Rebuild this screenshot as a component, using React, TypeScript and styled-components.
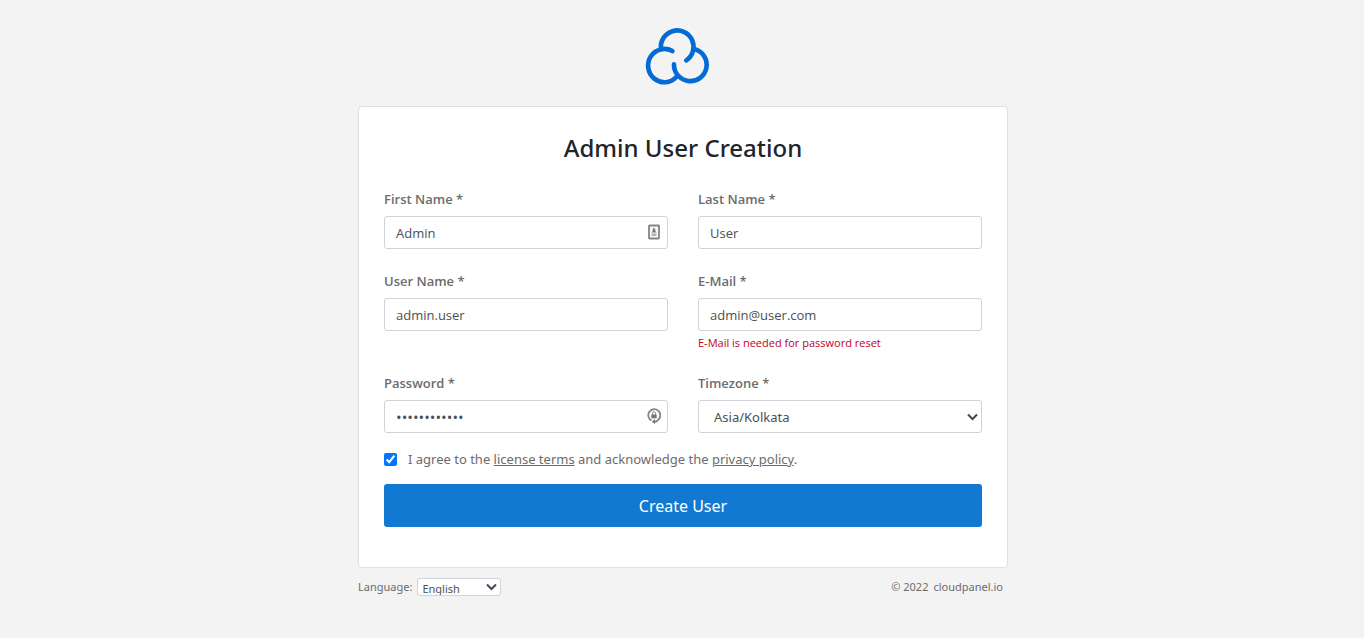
import React from "react";
import styled, { createGlobalStyle, css } from "styled-components";

const GlobalStyle = createGlobalStyle`
  *, *::before, *::after { box-sizing: border-box; }
  body {
    margin: 0;
    background: #f3f3f3;
    color: #6c6c6c;
    font-family: "Noto Sans", "Open Sans", sans-serif;
    font-size: 13px;
    line-height: 20px;
  }
`;

const Page = styled.div`
  max-width: 652px;
  margin: 0 auto;
  padding: 27px 0 24px 2px;
`;

const Header = styled.header`
  display: flex;
  justify-content: center;
  padding-right: 12px;
  margin-bottom: 21px;
`;

const Card = styled.main`
  background: #fff;
  border: 1px solid #dfdfdf;
  border-radius: 4px;
  padding: 24px 25px 40px;
`;

const Title = styled.h1`
  margin: 0 0 24px;
  color: #212529;
  font-size: 24px;
  font-weight: 500;
  line-height: 33px;
  text-align: center;
`;

const Grid = styled.div`
  display: grid;
  grid-template-columns: repeat(2, minmax(0, 1fr));
  column-gap: 30px;
  row-gap: 21px;
`;

const Field = styled.div`
  display: flex;
  flex-direction: column;
`;

const Label = styled.label`
  margin-bottom: 6px;
  font-family: "Open Sans", "Noto Sans", sans-serif;
  font-weight: 600;
  line-height: 22px;
`;

const control = css`
  width: 100%;
  height: 33px;
  border: 1px solid #ced4da;
  border-radius: 3px;
  background: #fff;
  color: #495057;
  font: inherit;
`;

const InputWrap = styled.div`
  position: relative;
  display: flex;
`;

const Input = styled.input`
  ${control}
  padding: 0 11px;
  font-family: "Open Sans", "Noto Sans", sans-serif;

  &[type="password"] {
    font-size: 15px;
  }
`;

const FieldIcon = styled.svg`
  position: absolute;
  right: 7px;
  top: 8px;
  pointer-events: none;
`;

const SelectWrap = styled.div<{ $compact?: boolean }>`
  position: relative;
  display: flex;
  width: ${(p) => (p.$compact ? "84px" : "100%")};
`;

const Select = styled.select<{ $compact?: boolean }>`
  ${control}
  appearance: none;
  height: ${(p) => (p.$compact ? "18px" : "33px")};
  padding: ${(p) => (p.$compact ? "0 4px" : "0 15px")};
`;

const Chevron = styled.svg`
  position: absolute;
  right: 4px;
  top: 50%;
  margin-top: -4px;
  pointer-events: none;
`;

const Hint = styled.small`
  margin-top: 3px;
  color: #c4001a;
  font-family: "Open Sans", "Noto Sans", sans-serif;
  font-size: 11px;
  line-height: 17px;
`;

const Terms = styled.div`
  display: flex;
  align-items: center;
  gap: 11px;
  margin: 16px 0 15px;
`;

const Checkbox = styled.input`
  width: 13px;
  height: 13px;
  margin: 0;
  accent-color: #0075ff;
`;

const Link = styled.a`
  color: inherit;
  text-decoration: underline;
`;

const Submit = styled.button`
  display: block;
  width: 100%;
  height: 43px;
  border: 0;
  border-radius: 3px;
  background: #1279d3;
  color: #fff;
  font: inherit;
  font-size: 16px;
  cursor: pointer;
`;

const Footer = styled.footer`
  display: flex;
  justify-content: space-between;
  align-items: center;
  padding: 9px 5px 0 0;
  font-size: 11px;
`;

const Language = styled.div`
  display: flex;
  align-items: center;
  gap: 5px;
`;

const Copyright = styled.div`
  display: flex;
  gap: 5px;
`;

const PlainLink = styled.a`
  color: inherit;
  text-decoration: none;
`;

const Logo = () => (
  <svg width="64" height="58" viewBox="28 22 192 174" fill="none" stroke="#046bd6" strokeWidth="14" strokeLinecap="round" overflow="visible" role="img" aria-label="CloudPanel">
    <path d="M76 88A49 49 0 1 1 152 122" />
    <path d="M110 94A49 50 0 1 0 122 172" />
    <path d="M115 134A49 49 0 1 0 176 88" />
  </svg>
);

const Arrow = () => (
  <Chevron width="11" height="8" viewBox="0 0 11 8" fill="none" stroke="#42484e" strokeWidth="2" aria-hidden="true">
    <path d="M1 1.5L5.500 6L10 1.500" />
  </Chevron>
);

const ContactIcon = () => (
  <FieldIcon width="14" height="16" viewBox="0 0 14 16" aria-hidden="true">
    <rect x="2" y="1.500" width="10" height="13" rx="0.500" fill="#f8f8f8" stroke="#858585" strokeWidth="1.800" />
    <path d="M7 3.500L8.300 5.500V7L9.500 8.500H4.500L5.700 7V5.500Z" fill="#777" />
    <path d="M4.500 9.500h5v2.500h-5z" fill="#b3b3b3" />
  </FieldIcon>
);

const KeyIcon = () => (
  <FieldIcon width="14" height="16" viewBox="0 0 14 16" fill="none" aria-hidden="true">
    <path d="M4.500 12.500A6 6 0 1 1 11.500 11.500" stroke="#858585" strokeWidth="1.800" />
    <path d="M11.800 11Q10.500 13.500 7.500 14" stroke="#858585" strokeWidth="1.800" />
    <path d="M8 11L4.800 13.700L8 16Z" fill="#777" />
    <path d="M5.500 7V5.300a1.500 1.500 0 0 1 3 0V7" stroke="#858585" />
    <rect x="4.300" y="6.500" width="5.400" height="3.800" fill="#777" />
  </FieldIcon>
);

type TextFieldProps = {
  id: string;
  label: string;
  value: string;
  type?: string;
  hint?: string;
  icon?: React.ReactNode;
};

const TextField = ({ id, label, value, type = "text", hint, icon }: TextFieldProps) => (
  <Field>
    <Label htmlFor={id}>{label} *</Label>
    <InputWrap>
      <Input id={id} type={type} defaultValue={value} />
      {icon}
    </InputWrap>
    {hint && <Hint>{hint}</Hint>}
  </Field>
);

export default function App() {
  return (
    <>
      <GlobalStyle />
      <Page>
        <Header>
          <Logo />
        </Header>
        <Card>
          <Title>Admin User Creation</Title>
          <form onSubmit={(e) => e.preventDefault()}>
            <Grid>
              <TextField id="first-name" label="First Name" value="Admin" icon={<ContactIcon />} />
              <TextField id="last-name" label="Last Name" value="User" />
              <TextField id="user-name" label="User Name" value="admin.user" />
              <TextField id="email" label="E-Mail" value="admin@user.com" type="email" hint="E-Mail is needed for password reset" />
              <TextField id="password" label="Password" value="cloudpanel22" type="password" icon={<KeyIcon />} />
              <Field>
                <Label htmlFor="timezone">Timezone *</Label>
                <SelectWrap>
                  <Select id="timezone" defaultValue="Asia/Kolkata">
                    <option>Asia/Kolkata</option>
                    <option>UTC</option>
                  </Select>
                  <Arrow />
                </SelectWrap>
              </Field>
            </Grid>
            <Terms>
              <Checkbox type="checkbox" id="terms" defaultChecked />
              <label htmlFor="terms">
                I agree to the <Link href="#license">license terms</Link> and acknowledge the{" "}
                <Link href="#privacy">privacy policy</Link>.
              </label>
            </Terms>
            <Submit type="submit">Create User</Submit>
          </form>
        </Card>
        <Footer>
          <Language>
            <label htmlFor="language">Language:</label>
            <SelectWrap $compact>
              <Select $compact id="language" defaultValue="English">
                <option>English</option>
                <option>Deutsch</option>
              </Select>
              <Arrow />
            </SelectWrap>
          </Language>
          <Copyright>
            <span>© 2022</span>
            <PlainLink href="#cloudpanel">cloudpanel.io</PlainLink>
          </Copyright>
        </Footer>
      </Page>
    </>
  );
}
